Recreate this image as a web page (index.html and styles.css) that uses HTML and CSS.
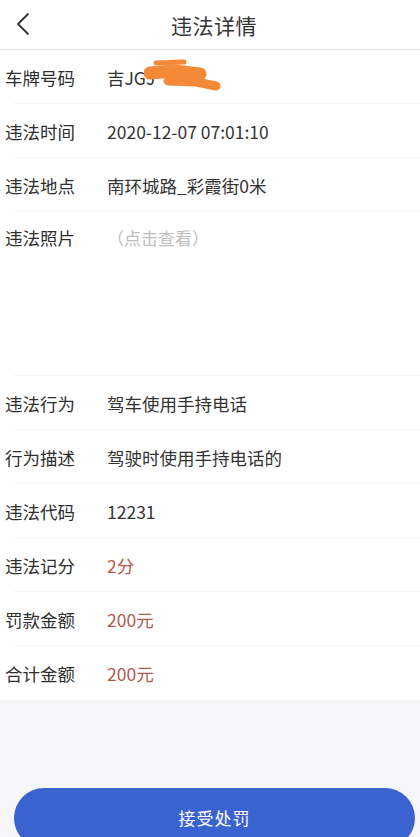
FILE: index.html
```html
<!DOCTYPE html>
<html lang="zh-CN">
<head>
<meta charset="utf-8">
<link rel="stylesheet" href="styles.css">
</head>
<body>
<div class="page">
  <header class="nav">
    <svg class="back" width="16" height="24" viewBox="0 0 16 24"><path d="M13 2 L3 12 L13 22" fill="none" stroke="#333" stroke-width="1.8" stroke-linecap="round" stroke-linejoin="round"/></svg>
    <h1 class="title">违法详情</h1>
  </header>
  <main class="list">
    <div class="row"><span class="label">车牌号码</span><span class="value">吉JG<span class="dot">J</span></span>
      <svg class="scribble" width="82" height="36" viewBox="0 0 82 36"><path d="M12 4 L40 3" stroke="#f38a38" stroke-width="5" stroke-linecap="round" fill="none"/><path d="M6 14 L30 12 L56 15" stroke="#f38a38" stroke-width="13" stroke-linecap="round" stroke-linejoin="round" fill="none"/><path d="M24 22 L52 23 L72 27" stroke="#f38a38" stroke-width="9" stroke-linecap="round" stroke-linejoin="round" fill="none"/></svg></div>
    <div class="row"><span class="label">违法时间</span><span class="value">2020-12-07 07:01:10</span></div>
    <div class="row"><span class="label">违法地点</span><span class="value">南环城路_彩霞街0米</span></div>
    <div class="row photo"><span class="label">违法照片</span><span class="value muted">（点击查看）</span></div>
    <div class="row"><span class="label">违法行为</span><span class="value">驾车使用手持电话</span></div>
    <div class="row"><span class="label">行为描述</span><span class="value">驾驶时使用手持电话的</span></div>
    <div class="row"><span class="label">违法代码</span><span class="value">12231</span></div>
    <div class="row"><span class="label">违法记分</span><span class="value red">2分</span></div>
    <div class="row"><span class="label">罚款金额</span><span class="value red">200元</span></div>
    <div class="row last"><span class="label">合计金额</span><span class="value red">200元</span></div>
  </main>
  <footer class="footer">
    <button class="accept">接受处罚</button>
  </footer>
</div>
</body>
</html>
```
FILE: styles.css
```css
html, body {
  margin: 0;
  padding: 0;
  background: #f6f6f8;
  font-family: "Noto Sans CJK SC", "Noto Sans", sans-serif;
  color: #333;
}
.page {
  width: 420px;
  height: 837px;
  overflow: hidden;
  display: flex;
  flex-direction: column;
}
.nav {
  height: 49px;
  background: #fff;
  border-bottom: 1px solid #e2e2e2;
  display: flex;
  align-items: center;
  justify-content: center;
  position: relative;
  flex-shrink: 0;
}
.back {
  position: absolute;
  left: 15px;
  top: 12px;
}
.title {
  margin: 0 0 0 8px;
  font-size: 21px;
  font-weight: 400;
  color: #333;
  letter-spacing: 0.5px;
}
.list {
  background: #fff;
  flex-shrink: 0;
}
.row {
  height: 54px;
  display: flex;
  align-items: center;
  padding-left: 5px;
  font-size: 17.5px;
  position: relative;
}
.row::after {
  content: "";
  position: absolute;
  left: 14px;
  right: 0;
  bottom: 0;
  height: 1px;
  background: #f5f5f7;
}
.row.last::after { display: none; }
.row.photo {
  height: 164px;
  align-items: flex-start;
  padding-top: 13px;
  box-sizing: border-box;
}
.label {
  width: 102px;
  flex-shrink: 0;
  color: #2e2e2e;
}
.value {
  color: #333;
}
.muted {
  color: #bdbdbd;
  font-size: 17px;
}
.red {
  color: #b4584c;
}
.dot { color: #333; }
.scribble {
  position: absolute;
  left: 144px;
  top: 9px;
}
.footer {
  flex: 1;
  padding: 88px 5px 0 14px;
}
.accept {
  width: 401px;
  height: 60px;
  border: none;
  border-radius: 30px;
  background: #3a63d1;
  color: #fff;
  font-family: "Noto Sans CJK SC", sans-serif;
  font-size: 17px;
  padding: 0;
  display: block;
  line-height: 60px;
  text-align: center;
  letter-spacing: 1px;
}
```
